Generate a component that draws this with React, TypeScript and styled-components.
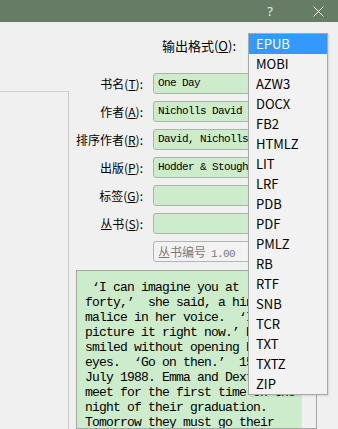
import React from "react";
import styled, { createGlobalStyle } from "styled-components";

const GlobalStyle = createGlobalStyle`
  html, body {
    margin: 0;
    padding: 0;
    background: #f0f0f0;
  }
  body {
    font-family: "Noto Sans CJK SC", "Noto Sans", sans-serif;
  }
`;

const Window = styled.div`
  width: 338px;
  height: 429px;
  overflow: hidden;
  display: flex;
  flex-direction: column;
  background: #f0f0f0;
  color: #000;
`;

// 标题栏
const TitleBar = styled.div`
  height: 22px;
  flex: none;
  background: #677c64;
  display: flex;
  justify-content: flex-end;
  align-items: center;
  gap: 8px;
`;

const TitleButton = styled.div`
  width: 40px;
  height: 22px;
  display: flex;
  align-items: center;
  justify-content: center;
  color: #e8ece8;
  font-family: "Noto Sans", sans-serif;
  font-size: 13px;
`;

const TopRow = styled.div`
  height: 46px;
  flex: none;
  display: flex;
  justify-content: flex-end;
  align-items: center;
  gap: 12px;
  padding-right: 10px;
`;

const FormatLabel = styled.span`
  font-size: 13px;
  white-space: nowrap;
`;

const ComboSlot = styled.div`
  position: relative;
  width: 80px;
  height: 20px;
`;

// 下拉列表
const Popup = styled.ul`
  position: absolute;
  top: -2px;
  left: 0;
  width: 80px;
  margin: 0;
  padding: 0;
  list-style: none;
  box-sizing: border-box;
  border: 1px solid #a8a8a8;
  background: #f2f2f2;
  box-shadow: 1px 1px 2px rgba(0, 0, 0, 0.12);
  z-index: 10;
`;

const PopupItem = styled.li<{ $active?: boolean }>`
  height: 20px;
  line-height: 20px;
  padding-left: 7px;
  font-size: 13px;
  color: ${(p) => (p.$active ? "#fff" : "#000")};
  background: ${(p) => (p.$active ? "#3399ff" : "transparent")};
`;

const Main = styled.div`
  flex: 1;
  min-height: 0;
  display: grid;
  grid-template-columns: 69px 1fr;
`;

const CoverPanel = styled.div`
  margin-top: 23px;
  border-top: 1px solid #d2d2d2;
  border-right: 1px solid #c8c8c8;
  box-sizing: border-box;
`;

const RightColumn = styled.div`
  display: flex;
  flex-direction: column;
  padding: 5px 21px 0 0;
  min-height: 0;
`;

const FormGrid = styled.div`
  display: grid;
  grid-template-columns: 1fr 164px;
  column-gap: 10px;
  row-gap: 7px;
  grid-auto-rows: 21px;
`;

const Label = styled.label`
  font-size: 12px;
  text-align: right;
  line-height: 21px;
  white-space: nowrap;
`;

const Field = styled.div`
  box-sizing: border-box;
  height: 21px;
  border: 1px solid #a9b5a9;
  border-radius: 3px;
  background: #cdeccb;
  padding-left: 4px;
  font-family: "Liberation Mono", monospace;
  font-size: 11px;
  letter-spacing: -0.6px;
  line-height: 19px;
  white-space: nowrap;
  overflow: hidden;
`;

const Spinner = styled.div`
  grid-column: 2;
  box-sizing: border-box;
  height: 21px;
  border: 1px solid #b4b4b4;
  border-radius: 3px;
  background: #f2f2f2;
  padding-left: 4px;
  color: #7a7a7a;
  font-size: 12px;
  line-height: 19px;
  white-space: nowrap;
`;

const SpinNumber = styled.span`
  font-family: "Liberation Mono", monospace;
  font-size: 11px;
  letter-spacing: -0.6px;
  margin-left: 5px;
`;

const Comments = styled.div`
  flex: 1;
  min-height: 0;
  margin: 8px 0 0 7px;
  border: 1px solid #a0a8a0;
  display: flex;
  overflow: hidden;
`;

const CommentText = styled.div`
  flex: 1;
  background: #cdeccb;
  padding: 9px 0 0 8px;
  font-family: "Liberation Mono", monospace;
  font-size: 13px;
  letter-spacing: -0.8px;
  line-height: 15px;
  white-space: pre;
  overflow: hidden;
`;

const ScrollTrack = styled.div`
  width: 14px;
  flex: none;
  background: #f0f0f0;
  border-left: 1px solid #e4e4e4;
`;

const U = styled.span`
  text-decoration: underline;
`;

const formats = [
  "EPUB", "MOBI", "AZW3", "DOCX", "FB2", "HTMLZ", "LIT", "LRF", "PDB",
  "PDF", "PMLZ", "RB", "RTF", "SNB", "TCR", "TXT", "TXTZ", "ZIP",
];

const fields: { label: string; key: string; value: string }[] = [
  { label: "书名", key: "T", value: "One Day" },
  { label: "作者", key: "A", value: "Nicholls David" },
  { label: "排序作者", key: "R", value: "David, Nicholls" },
  { label: "出版", key: "P", value: "Hodder & Stoughton" },
  { label: "标签", key: "G", value: "" },
  { label: "丛书", key: "S", value: "" },
];

const comment = [
  " ‘I can imagine you at",
  "forty,’  she said, a hint of",
  "malice in her voice.  ‘I can",
  "picture it right now.’ He",
  "smiled without opening his",
  "eyes.  ‘Go on then.’  15th",
  "July 1988. Emma and Dexter",
  "meet for the first time on the",
  "night of their graduation.",
  "Tomorrow they must go their",
].join("\n");

const App = () => {
  return (
    <>
      <GlobalStyle />
      <Window>
        <TitleBar>
          <TitleButton>?</TitleButton>
          <TitleButton>
            <svg width="11" height="11" viewBox="0 0 11 11">
              <path d="M0.5 0.5 L10.5 10.5 M10.5 0.5 L0.5 10.5" stroke="#eef1ee" strokeWidth="1" />
            </svg>
          </TitleButton>
        </TitleBar>
        <TopRow>
          <FormatLabel>
            输出格式(<U>O</U>):
          </FormatLabel>
          <ComboSlot>
            <Popup>
              {formats.map((f, i) => (
                <PopupItem key={f} $active={i === 0}>
                  {f}
                </PopupItem>
              ))}
            </Popup>
          </ComboSlot>
        </TopRow>
        <Main>
          <CoverPanel />
          <RightColumn>
            <FormGrid>
              {fields.map((f) => (
                <React.Fragment key={f.key}>
                  <Label>
                    {f.label}(<U>{f.key}</U>):
                  </Label>
                  <Field>{f.value}</Field>
                </React.Fragment>
              ))}
              <Spinner>
                丛书编号<SpinNumber>1.00</SpinNumber>
              </Spinner>
            </FormGrid>
            <Comments>
              <CommentText>{comment}</CommentText>
              <ScrollTrack />
            </Comments>
          </RightColumn>
        </Main>
      </Window>
    </>
  );
};

export default App;
